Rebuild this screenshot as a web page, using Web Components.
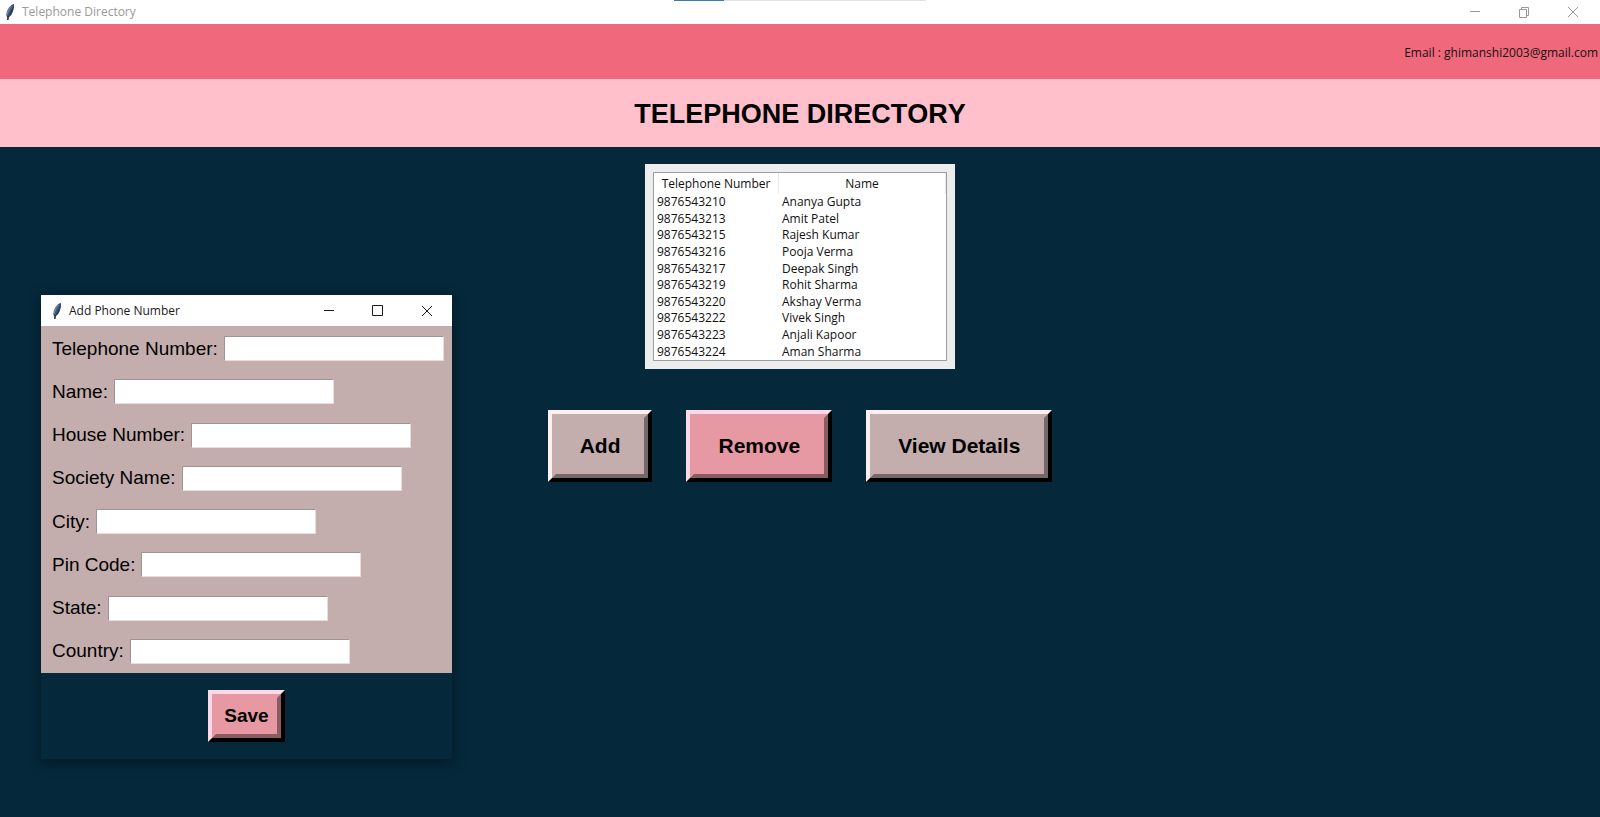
<!DOCTYPE html>
<html lang="en">
<head>
<meta charset="utf-8">
<title>Telephone Directory</title>
<style>
  html, body { height: 100%; margin: 0; }
  body { background: #05283b; font-family: "Open Sans", "Noto Sans", sans-serif; font-size: 12px; color: #111; overflow: hidden; }
</style>
</head>
<body>
<directory-app></directory-app>

<script>
const define = (name, html, setup) => {
  const template = document.createElement('template');
  template.innerHTML = html;
  customElements.define(name, class extends HTMLElement {
    connectedCallback() {
      if (this.shadowRoot) return;
      this.attachShadow({ mode: 'open' }).append(template.content.cloneNode(true));
      if (setup) setup(this, this.shadowRoot);
    }
  });
};

/* Quill icon used in window captions */
define('feather-icon', `
  <style>:host { display: block; flex: none; width: 12px; height: 18px; } svg { display: block; }</style>
  <svg width="12" height="18" viewBox="0 0 12 18" aria-hidden="true">
    <path d="M10 1C7 1.500 4.300 4.500 3 8.500C2.200 11 2 12.500 3.200 14.500L5.500 13.500C8.500 11 10 6 10 1Z" fill="#3f5a80"/>
    <path d="M10 1C8.500 5 6.500 9 4 14.200L5.500 13.500C8.500 11 10 6 10 1Z" fill="#2a3d5a"/>
    <path d="M7.500 3C5.500 5 4 8 3.200 11.500" stroke="#7d95b5" stroke-width="1" fill="none"/>
    <path d="M4.200 13L3.800 17" stroke="#222" stroke-width="1.500"/>
  </svg>`);

/* Window caption: icon, title and the three window controls */
define('title-bar', `
  <style>
    :host { display: flex; align-items: center; height: 24px; box-sizing: border-box; padding: 0 3px 0 4px; background: #fff; color: #999; }
    :host([active]) { height: 31px; padding: 0 1px 0 10px; color: #1a1a1a; }
    .title { flex: 1; margin-left: 6px; line-height: 16px; white-space: nowrap; }
    button { width: 49px; height: 100%; padding: 0; border: 0; background: none; color: inherit; display: grid; place-items: center; }
    svg { display: block; fill: none; stroke: currentColor; }
    :host([active]) .restore, :host(:not([active])) .max { display: none; }
  </style>
  <feather-icon></feather-icon>
  <span class="title"><slot></slot></span>
  <button type="button" aria-label="Minimize"><svg width="12" height="12"><path d="M1 5.500H11"/></svg></button>
  <button type="button" aria-label="Maximize">
    <svg class="max" width="12" height="12"><path d="M.5 .5H10.500V10.500H.5Z"/></svg>
    <svg class="restore" width="12" height="12"><path d="M1.500 3.500H8.500V11.500H1.500ZM3.500 3.500V1.500H10.500V9.500H8.500"/></svg>
  </button>
  <button type="button" aria-label="Close"><svg width="12" height="12"><path d="M1 1L11 11M11 1L1 11"/></svg></button>`);

/* Raised button with a two-step bevel */
define('raised-button', `
  <style>
    :host { display: block; --face: #c4aead; --light: #fff0ef; --shade: #756867; --pad: 22px 24px; font-size: 21px; }
    :host([tone="rose"]) { --face: #e799a3; --light: #ffd9e7; --shade: #8a5b61; }
    :host([size="small"]) { --pad: 12px 8px; font-size: 19px; }
    button { display: block; padding: 0; border: 4px solid; border-color: var(--light) #000 #000 var(--light); background: var(--face); color: #000; font: bold 1em "Liberation Sans", Arial, sans-serif; }
    span { display: block; padding: var(--pad); border: 4px solid; border-color: var(--face) var(--shade) var(--shade) var(--face); line-height: 12px; white-space: nowrap; }
  </style>
  <button type="button"><span><slot></slot></span></button>`);

/* Label and text box of one form line */
define('form-field', `
  <style>
    :host { display: flex; align-items: center; gap: 6px; font: 19px "Liberation Sans", Arial, sans-serif; color: #000; }
    label { white-space: nowrap; line-height: 22px; }
    input { box-sizing: border-box; width: 220px; height: 25px; padding: 0 3px; border: 1px solid; border-color: #a09493 #e6dddc #e6dddc #a09493; background: #fff; font: inherit; border-radius: 0; }
  </style>
  <label for="field"></label><input id="field" type="text">`,
  (host, root) => { root.querySelector('label').textContent = host.getAttribute('label'); });

define('contact-table', `
  <style>
    :host { display: block; box-sizing: border-box; padding: 8px; background: #ededed; }
    .frame { border: 1px solid #9a9ea6; background: #fff; }
    table { width: 292px; height: 187px; table-layout: fixed; border-collapse: separate; border-spacing: 0; line-height: 16px; }
    col:first-child { width: 125px; }
    th { height: 21px; padding: 0; font-weight: normal; border-right: 1px solid #e8e8e8; }
    td { padding: 0 0 0 3px; text-align: left; white-space: nowrap; }
  </style>
  <div class="frame"><table>
    <colgroup><col><col></colgroup>
    <thead><tr><th scope="col">Telephone Number</th><th scope="col">Name</th></tr></thead>
    <tbody></tbody>
  </table></div>`,
  (host, root) => {
    const body = root.querySelector('tbody');
    for (const entry of [
      ['9876543210', 'Ananya Gupta'], ['9876543213', 'Amit Patel'], ['9876543215', 'Rajesh Kumar'],
      ['9876543216', 'Pooja Verma'], ['9876543217', 'Deepak Singh'], ['9876543219', 'Rohit Sharma'],
      ['9876543220', 'Akshay Verma'], ['9876543222', 'Vivek Singh'], ['9876543223', 'Anjali Kapoor'],
      ['9876543224', 'Aman Sharma']]) {
      const row = body.insertRow();
      for (const text of entry) row.insertCell().textContent = text;
    }
  });

define('add-dialog', `
  <style>
    :host { display: block; width: 411px; background: #05283b; box-shadow: 0 3px 12px 1px rgba(0, 0, 0, .35); }
    .fields { display: flex; flex-direction: column; justify-content: space-between; box-sizing: border-box; min-height: 347px; padding: 10px 11px 9px; background: #c4aead; }
    .actions { display: flex; justify-content: center; padding: 17px 0; }
  </style>
  <title-bar active>Add Phone Number</title-bar>
  <form>
    <div class="fields">
      <form-field label="Telephone Number:"></form-field>
      <form-field label="Name:"></form-field>
      <form-field label="House Number:"></form-field>
      <form-field label="Society Name:"></form-field>
      <form-field label="City:"></form-field>
      <form-field label="Pin Code:"></form-field>
      <form-field label="State:"></form-field>
      <form-field label="Country:"></form-field>
    </div>
    <div class="actions"><raised-button tone="rose" size="small">Save</raised-button></div>
  </form>`);

define('directory-app', `
  <style>
    :host { display: flex; flex-direction: column; min-height: 100%; position: relative; }
    .progress { position: absolute; top: 0; left: 0; right: 0; display: flex; justify-content: center; }
    .progress i { width: 50px; height: 1px; background: #3a7ab5; }
    .progress i + i { width: 202px; background: #e2e2e2; }
    .contact { display: flex; align-items: center; justify-content: flex-end; box-sizing: border-box; height: 55px; padding: 2px 2px 0 0; background: #f0687c; }
    h1 { margin: 0; padding: 19px 0 17px; background: #ffbfcb; text-align: center; font: bold 27px/32px "Liberation Sans", Arial, sans-serif; font-kerning: none; color: #000; }
    main { display: flex; flex-direction: column; align-items: center; gap: 41px; padding-top: 17px; }
    .buttons { display: flex; gap: 34px; }
    add-dialog { position: absolute; left: 41px; top: 295px; }
  </style>
  <title-bar>Telephone Directory</title-bar>
  <div class="progress"><i></i><i></i></div>
  <div class="contact">Email : ghimanshi2003@gmail.com</div>
  <h1>TELEPHONE DIRECTORY</h1>
  <main>
    <contact-table></contact-table>
    <div class="buttons">
      <raised-button>Add</raised-button>
      <raised-button tone="rose">Remove</raised-button>
      <raised-button>View Details</raised-button>
    </div>
  </main>
  <add-dialog></add-dialog>`);
</script>
</body>
</html>
